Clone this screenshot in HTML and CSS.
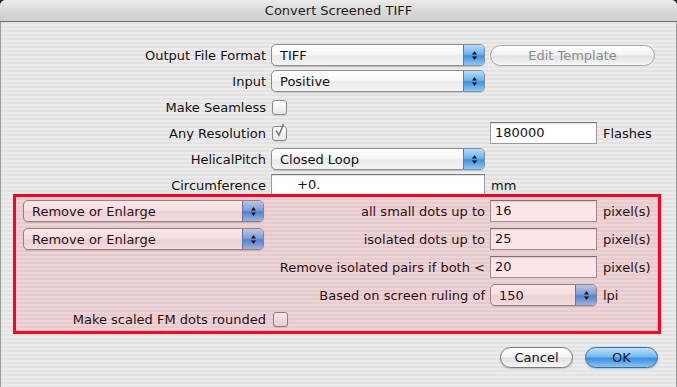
FILE: index.html
```html
<!DOCTYPE html>
<html lang="en">
<head>
    <meta charset="UTF-8">
    <meta name="viewport" content="width=device-width, initial-scale=1.0">
    <title>Convert Screened TIFF</title>
    <link rel="stylesheet" href="styles.css">
</head>
<body>
    <div class="window">
        <div class="titlebar">Convert Screened TIFF</div>

        <div class="content">
            <div class="form">
                <div class="row">
                    <span class="lbl">Output File Format</span>
                    <div class="popup"><span class="popup-text">TIFF</span><span class="popup-arrows"><svg width="7" height="11" viewBox="0 0 7 11"><polygon points="3.5,1 6,4.5 1,4.5"/><polygon points="1,6.5 6,6.5 3.5,10"/></svg></span></div>
                    <button class="pill pill-disabled template-btn">Edit Template</button>
                </div>
                <div class="row">
                    <span class="lbl">Input</span>
                    <div class="popup"><span class="popup-text">Positive</span><span class="popup-arrows"><svg width="7" height="11" viewBox="0 0 7 11"><polygon points="3.5,1 6,4.5 1,4.5"/><polygon points="1,6.5 6,6.5 3.5,10"/></svg></span></div>
                </div>
                <div class="row">
                    <span class="lbl">Make Seamless</span>
                    <span class="check"></span>
                </div>
                <div class="row">
                    <span class="lbl">Any Resolution</span>
                    <span class="check"><svg width="14" height="14" viewBox="0 0 14 14"><polyline points="3,6.5 6,11 11,-1" fill="none" stroke="#7a7a7a" stroke-width="1.6"/></svg></span>
                    <span class="field">180000</span>
                    <span class="unit">Flashes</span>
                </div>
                <div class="row">
                    <span class="lbl">HelicalPitch</span>
                    <div class="popup"><span class="popup-text">Closed Loop</span><span class="popup-arrows"><svg width="7" height="11" viewBox="0 0 7 11"><polygon points="3.5,1 6,4.5 1,4.5"/><polygon points="1,6.5 6,6.5 3.5,10"/></svg></span></div>
                </div>
                <div class="row">
                    <span class="lbl">Circumference</span>
                    <span class="field field-wide">+0.</span>
                    <span class="unit unit-near">mm</span>
                </div>
            </div>

            <div class="filter-box">
                <div class="frow">
                    <div class="popup popup-left"><span class="popup-text">Remove or Enlarge</span><span class="popup-arrows"><svg width="7" height="11" viewBox="0 0 7 11"><polygon points="3.5,1 6,4.5 1,4.5"/><polygon points="1,6.5 6,6.5 3.5,10"/></svg></span></div>
                    <span class="lbl">all small dots up to</span>
                    <span class="field">16</span>
                    <span class="unit">pixel(s)</span>
                </div>
                <div class="frow">
                    <div class="popup popup-left"><span class="popup-text">Remove or Enlarge</span><span class="popup-arrows"><svg width="7" height="11" viewBox="0 0 7 11"><polygon points="3.5,1 6,4.5 1,4.5"/><polygon points="1,6.5 6,6.5 3.5,10"/></svg></span></div>
                    <span class="lbl">isolated dots up to</span>
                    <span class="field">25</span>
                    <span class="unit">pixel(s)</span>
                </div>
                <div class="frow">
                    <span class="lbl lbl-span">Remove isolated pairs if both &lt;</span>
                    <span class="field">20</span>
                    <span class="unit">pixel(s)</span>
                </div>
                <div class="frow frow-tight">
                    <span class="lbl lbl-span">Based on screen ruling of</span>
                    <div class="popup popup-small"><span class="popup-text">150</span><span class="popup-arrows"><svg width="7" height="11" viewBox="0 0 7 11"><polygon points="3.5,1 6,4.5 1,4.5"/><polygon points="1,6.5 6,6.5 3.5,10"/></svg></span></div>
                    <span class="unit">lpi</span>
                </div>
                <div class="frow frow-last">
                    <span class="lbl">Make scaled FM dots rounded</span>
                    <span class="check check-near"></span>
                </div>
            </div>

            <div class="actions">
                <button class="pill">Cancel</button>
                <button class="pill pill-default">OK</button>
            </div>
        </div>
    </div>
</body>
</html>
```

FILE: styles.css
```css
html, body {
    margin: 0;
    padding: 0;
    background: #2b2b2b;
}
body {
    width: 677px;
    height: 387px;
    overflow: hidden;
    font-family: "DejaVu Sans", sans-serif;
    font-size: 13px;
    color: #111;
}
.window {
    height: 387px;
    border-radius: 6px 6px 0 0;
    overflow: hidden;
    background: repeating-linear-gradient(to bottom, #ebebeb 0, #ebebeb 2px, #e3e3e3 2px, #e3e3e3 4px);
    box-shadow: inset 1px 0 0 #9a9a9a, inset -1px 0 0 #9a9a9a;
}
.titlebar {
    height: 21px;
    line-height: 21px;
    text-align: center;
    color: #1c1c1c;
    background: linear-gradient(#ececec, #d9d9d9 50%, #cfcfcf);
    border-bottom: 1px solid #6f6f6f;
}
.content {
    padding-top: 22px;
}

/* rows of the upper form */
.row {
    display: grid;
    grid-template-columns: 266px 214px 107px 1fr;
    column-gap: 5px;
    align-items: center;
    height: 22px;
    margin-bottom: 4px;
}
.lbl {
    text-align: right;
    white-space: nowrap;
}
.unit {
    margin-left: 1px;
    white-space: nowrap;
}

/* aqua popup menu */
.popup {
    position: relative;
    display: flex;
    align-items: center;
    height: 20px;
    border: 1px solid #8d8d8d;
    border-radius: 5px;
    background: linear-gradient(#ffffff, #f7f7f7 45%, #e9e9e9 55%, #f4f4f4);
    box-shadow: 0 1px 1px rgba(0,0,0,0.15);
    overflow: hidden;
}
.popup-text {
    flex: 1;
    padding-left: 8px;
    white-space: nowrap;
}
.popup-arrows {
    width: 20px;
    height: 20px;
    display: flex;
    align-items: center;
    justify-content: center;
    border-left: 1px solid #4f7fb5;
    background: linear-gradient(#b5dcf8, #6fb4ec 45%, #3f90e0 55%, #8ccaf6);
}
.popup-arrows svg {
    fill: #111;
}

/* text fields */
.field {
    height: 20px;
    line-height: 20px;
    padding-left: 4px;
    background: #fff;
    border: 1px solid #9a9a9a;
    border-top-color: #7a7a7a;
    box-shadow: inset 0 1px 1px rgba(0,0,0,0.12);
    grid-column: 3;
}
.field-wide {
    grid-column: 2;
    padding-left: 25px;
}
.unit-near {
    grid-column: 3;
}

/* checkbox */
.check {
    width: 13px;
    height: 13px;
    margin-left: 1px;
    border: 1px solid #8a8a8a;
    border-radius: 3px;
    background: linear-gradient(#ffffff, #e6e6e6);
    box-shadow: 0 1px 1px rgba(0,0,0,0.1);
    position: relative;
}
.check svg {
    position: absolute;
    left: 0;
    top: -3px;
}

/* buttons */
.pill {
    font-family: "DejaVu Sans", sans-serif;
    font-size: 13px;
    height: 21px;
    padding: 0;
    border: 1px solid #7a7a7a;
    border-radius: 11px;
    background: linear-gradient(#ffffff, #f2f2f2 45%, #e2e2e2 55%, #f7f7f7);
    box-shadow: 0 1px 2px rgba(0,0,0,0.2);
    color: #111;
}
.pill-disabled {
    color: #8c8c8c;
    border-color: #a4a4a4;
    box-shadow: none;
}
.template-btn {
    grid-column: 3 / 5;
    justify-self: start;
    width: 165px;
}
.pill-default {
    border-color: #3f6a9e;
    background: linear-gradient(#bfe2fb, #74b9ef 45%, #3c8fe0 55%, #86c7f5);
    color: #0e1a2a;
}

/* highlighted filter group */
.filter-box {
    position: relative;
    width: 642px;
    margin: -6px 0 0 13px;
    padding: 3px 0 1px;
    border: 3px solid #ff0022;
}
.filter-box::after {
    content: "";
    position: absolute;
    inset: 0;
    background: rgba(255, 0, 20, 0.1);
    pointer-events: none;
}
.frow {
    display: grid;
    grid-template-columns: 250px 214px 107px 1fr;
    column-gap: 5px;
    align-items: center;
    height: 22px;
    margin-bottom: 6px;
}
.frow-tight {
    margin-bottom: 2px;
}
.frow-last {
    margin-bottom: 0;
}
.popup-left {
    margin-left: 7px;
    width: 239px;
}
.lbl-span {
    grid-column: 1 / 3;
}
.popup-small {
    grid-column: 3;
}
.check-near {
    margin-left: 2px;
}

.actions {
    display: flex;
    justify-content: flex-end;
    gap: 12px;
    padding: 13px 19px 0 0;
}
.actions .pill {
    width: 73px;
}
```
